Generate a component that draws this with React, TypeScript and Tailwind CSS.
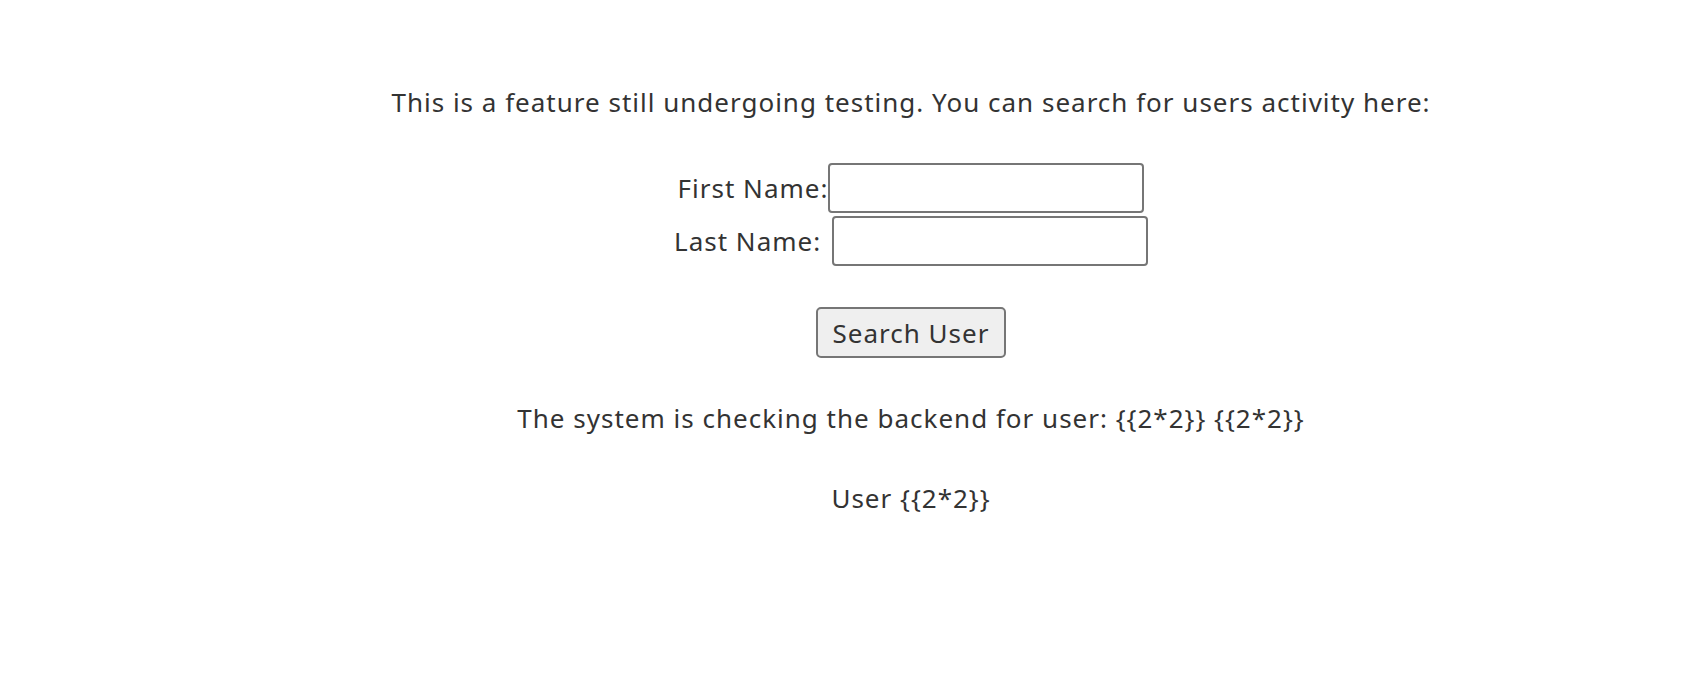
import React from "react";

export default function App() {
  return (
    <div
      className="min-h-[686px] bg-white pl-[120px] text-center text-[26px] leading-[36px] tracking-[1px] text-[#333333]"
      style={{ fontFamily: '"Noto Sans", "Open Sans", sans-serif' }}
    >
      <p className="pt-[84px]">
        This is a feature still undergoing testing. You can search for users activity here:
      </p>
      <form className="mt-[43px] flex flex-col items-center" onSubmit={(e) => e.preventDefault()}>
        <div className="flex items-center justify-center">
          <label htmlFor="fn">First Name:</label>
          <input
            id="fn"
            type="text"
            className="h-[50px] w-[316px] rounded-[4px] border-2 border-[#767676] bg-white"
          />
        </div>
        <div className="mt-[3px] flex items-center justify-center">
          <label htmlFor="ln" className="whitespace-pre">Last Name: </label>
          <input
            id="ln"
            type="text"
            className="ml-[3px] h-[50px] w-[316px] rounded-[4px] border-2 border-[#767676] bg-white"
          />
        </div>
        <button
          type="submit"
          className="mt-[41px] h-[51px] w-[190px] rounded-[5px] border-2 border-[#767676] bg-[#efefef] text-[26px] tracking-[1px] text-[#333333]"
        >
          Search User
        </button>
      </form>
      <p className="mt-[42px]">The system is checking the backend for user: {"{{2*2}}"} {"{{2*2}}"}</p>
      <p className="mt-[44px]">User {"{{2*2}}"}</p>
    </div>
  );
}
